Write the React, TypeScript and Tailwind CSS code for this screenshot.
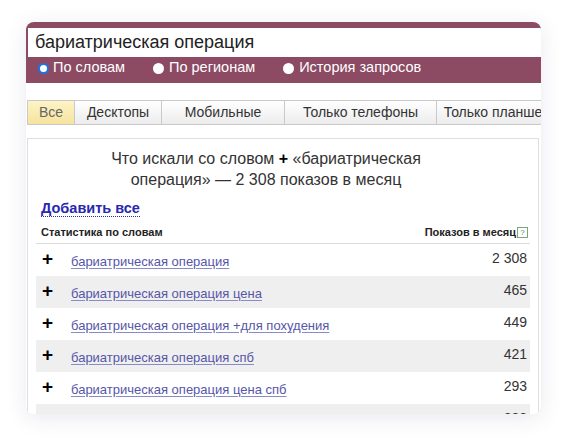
const rows = [
  { phrase: 'бариатрическая операция', count: '2 308' },
  { phrase: 'бариатрическая операция цена', count: '465' },
  { phrase: 'бариатрическая операция +для похудения', count: '449' },
  { phrase: 'бариатрическая операция спб', count: '421' },
  { phrase: 'бариатрическая операция цена спб', count: '293' },
  { phrase: 'бариатрическая операция отзывы', count: '288' },
]

const tabs = [
  { label: 'Все', w: 'w-[48px]', active: true },
  { label: 'Десктопы', w: 'w-[88px]' },
  { label: 'Мобильные', w: 'w-[124px]' },
  { label: 'Только телефоны', w: 'w-[153px]' },
  { label: 'Только планшеты', w: 'w-[130px]' },
]

function Radio({ checked }: { checked?: boolean }) {
  return (
    <span
      className={`inline-block w-[11px] h-[11px] rounded-full bg-white shrink-0 ${
        checked ? 'border-[2px] border-[#1a73e8]' : ''
      }`}
    />
  )
}

export default function App() {
  return (
    <div className="w-[567px] h-[446px] bg-white overflow-hidden font-['Liberation_Sans',Arial,sans-serif]">
      <div className="ml-[26px] mt-[22px] w-[515px] h-[392px] rounded-[8px] overflow-hidden bg-white shadow-[0_4px_22px_rgba(30,40,90,0.10)]">
        <header className="bg-[#8c4a63] pl-[2px] pt-[6px] h-[61px]">
          <div className="bg-white h-[29px] pl-[7px] flex items-center text-[18px] text-[#222] whitespace-nowrap">
            бариатрическая операция
          </div>
          <div className="flex items-center h-[22px] pl-[10px] text-[14.5px] text-white whitespace-nowrap">
            <Radio checked />
            <span className="ml-[4px]">По словам</span>
            <span className="ml-[28px] flex"><Radio /></span>
            <span className="ml-[5px]">По регионам</span>
            <span className="ml-[28px] flex"><Radio /></span>
            <span className="ml-[5px]">История запросов</span>
          </div>
        </header>

        <nav className="flex mt-[17px] ml-[1px] h-[25px] whitespace-nowrap">
          {tabs.map(t => (
            <div
              key={t.label}
              className={`${t.w} shrink-0 flex items-center justify-center text-[14px] border border-[#c9c9c9] -ml-px first:ml-0 ${
                t.active
                  ? 'bg-gradient-to-b from-[#fdf3c6] to-[#f6e39e] text-[#666]'
                  : 'bg-gradient-to-b from-white to-[#ececec] text-[#333]'
              }`}
            >
              {t.label}
            </div>
          ))}
        </nav>

        <div className="mt-[13px] ml-[1px] w-[512px] border border-[#dedede] h-[300px] px-[8px]">
          <h1 className="pt-[9px] pr-[34px] text-center text-[16px] leading-[21px] text-[#333]">
            Что искали со словом <b className="text-black">+</b> «бариатрическая
            <br />
            операция» — 2 308 показов в месяц
          </h1>

          <div className="mt-[6px] pl-[5px]">
            <a className="text-[14.5px] font-bold text-[#2828b0] border-b border-dotted border-[#2828b0] leading-[16px]">
              Добавить все
            </a>
          </div>

          <div className="mt-[3px] flex items-center justify-between pl-[5px] pr-[2px] h-[18px] text-[11px] font-bold text-[#222] border-b border-[#dcdcdc] pb-[2px] box-content">
            <span>Статистика по словам</span>
            <span className="flex items-center gap-[1px]">
              Показов в месяц
              <span className="w-[11px] h-[11px] border border-[#7aa87a] text-[8px] leading-[9px] text-[#5a8a5a] flex items-center justify-center font-normal">
                ?
              </span>
            </span>
          </div>

          <ul>
            {rows.map((r, i) => (
              <li
                key={r.phrase}
                className={`flex items-start h-[32px] pl-[6px] pr-[3px] ${i % 2 ? 'bg-[#efefef]' : 'bg-white'}`}
              >
                <span className="w-[29px] pt-[5px] text-[19px] font-bold leading-[20px] text-black">+</span>
                <a className="pt-[10px] text-[13px] leading-[15px] text-[#5656a8] underline underline-offset-[2px] decoration-[#8a8ac8]">
                  {r.phrase}
                </a>
                <span className="ml-auto pt-[6px] text-[14px] leading-[16px] text-[#333]">{r.count}</span>
              </li>
            ))}
          </ul>
        </div>
      </div>
    </div>
  )
}
